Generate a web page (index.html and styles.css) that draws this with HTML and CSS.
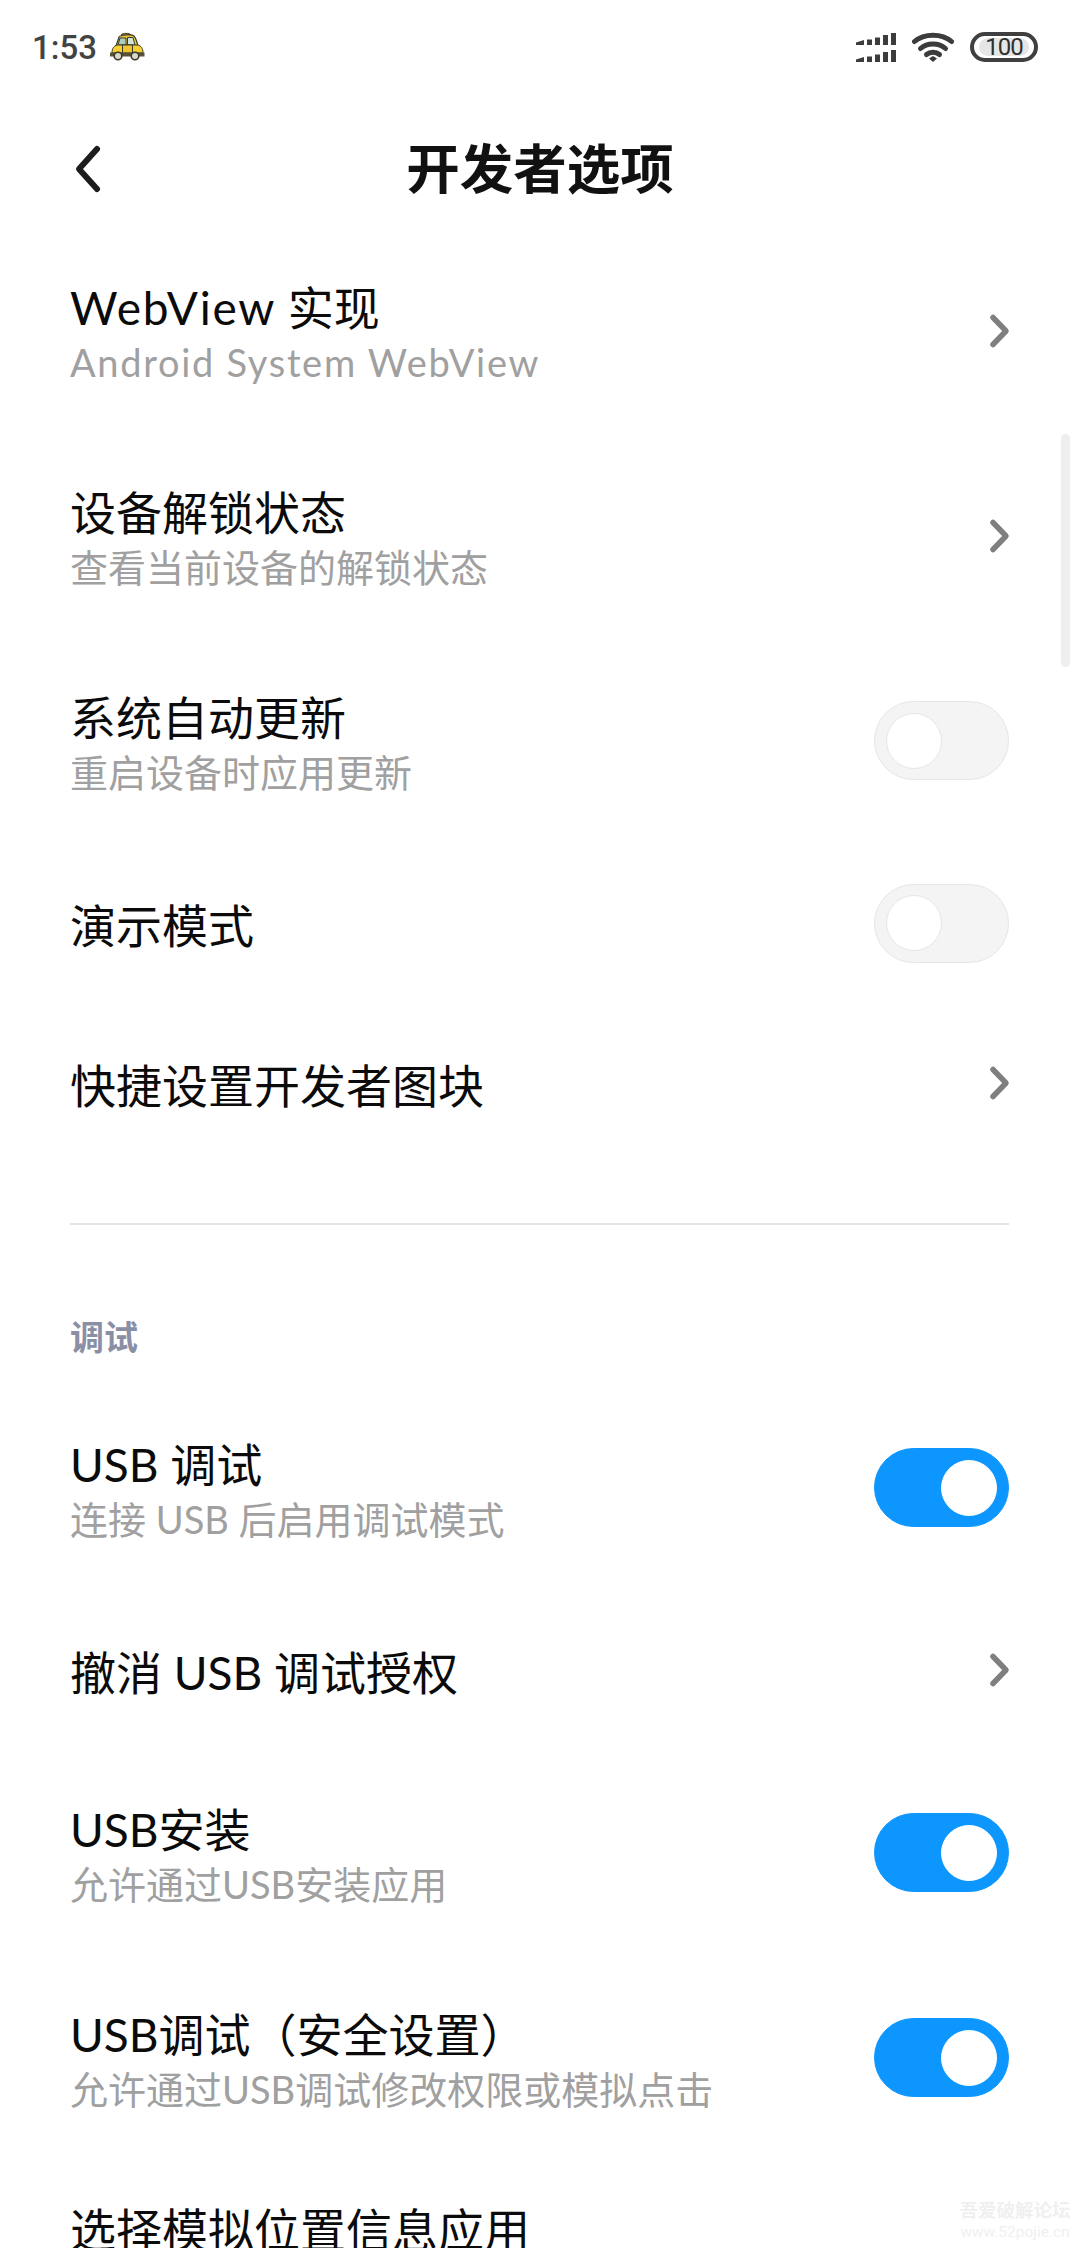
FILE: index.html
```html
<!DOCTYPE html>
<html lang="zh">
<head>
<meta charset="utf-8">
<title>开发者选项</title>
<link rel="stylesheet" href="styles.css">
</head>
<body>
<div class="phone">
  <header class="status">
    <div class="status-left">
      <span class="clock">1:53</span>
      <svg class="taxi" width="36" height="30" viewBox="0 0 36 30">
        <path d="M12 3 C13 .8 21 .8 22 3 Z" fill="#e8b92a" stroke="#3d3a2c" stroke-width="1"/>
        <path d="M7 14 L10 5 C11 3 23 2 25 4 C27 6 28 10 29 14 Z" fill="#f0c93a" stroke="#3d3a2c" stroke-width="1.200"/>
        <path d="M11 6 H17 V13 H9 Z" fill="#a9cfc4" stroke="#3d3a2c" stroke-width="1"/>
        <path d="M18.500 5.500 H24 L26 13 H18.500 Z" fill="#cfe3d8" stroke="#3d3a2c" stroke-width="1"/>
        <path d="M3 21 C3 16 5 14 8 13 H29 C32 14 34 16 34 21 Z" fill="#f6d02f" stroke="#3d3a2c" stroke-width="1"/>
        <path d="M13.500 13 H23.500 V21 H13.500 Z" fill="#f0c52e" stroke="#3d3a2c" stroke-width="1"/>
        <path d="M1 20.500 H35.500 V24.500 H1 Z" fill="#5a5238"/>
        <circle cx="9" cy="24" r="3.800" fill="#d8d8cc" stroke="#3d3a2c" stroke-width="1.600"/>
        <circle cx="26" cy="24" r="3.800" fill="#d8d8cc" stroke="#3d3a2c" stroke-width="1.600"/>
      </svg>
    </div>
    <div class="status-right">
      <svg class="signal" width="40" height="31" viewBox="0 0 40 31">
        <path d="M0 10.500 L8 8 V13 H0 Z M11 7.500 H16 V13 H11 Z M19 5.500 H24 V13 H19 Z M27 3 H32 V13 H27 Z M35 1 H40 V13 H35 Z"/>
        <path d="M0 27.500 L8 25 V30 H0 Z M11 24.500 H16 V30 H11 Z M19 22.500 H24 V30 H19 Z M27 20 H32 V30 H27 Z M35 18 H40 V30 H35 Z"/>
      </svg>
      <svg class="wifi" width="42" height="31" viewBox="0 0 42 31" fill="none">
        <path class="wifi-arc" d="M2.500 9.500 C12 1 30 1 39.500 9.500"/>
        <path class="wifi-arc" d="M8.500 16.500 C15 10.500 27 10.500 33.500 16.500"/>
        <path class="wifi-arc" d="M14.500 22.500 C18 19.500 24 19.500 27.500 22.500"/>
        <path class="wifi-dot" d="M17 26.500 L21 24 L25 26.500 L21 30 Z"/>
      </svg>
      <div class="battery"><span class="battery-num">100</span></div>
    </div>
  </header>

  <nav class="topbar">
    <svg class="back" width="34" height="50" viewBox="0 0 34 50" fill="none">
      <path d="M26 5 L8 25 L26 45"/>
    </svg>
    <h1 class="title">开发者选项</h1>
  </nav>

  <section class="list">
    <div class="row row-two">
      <div class="text"><div class="name"><span class="en">WebView</span> 实现</div><div class="sub"><span class="en">Android System WebView</span></div></div>
      <svg class="chev" width="24" height="36" viewBox="0 0 24 36" fill="none"><path d="M6 4.500 L19 18 L6 31.500"/></svg>
    </div>
    <div class="row row-two">
      <div class="text"><div class="name">设备解锁状态</div><div class="sub">查看当前设备的解锁状态</div></div>
      <svg class="chev" width="24" height="36" viewBox="0 0 24 36" fill="none"><path d="M6 4.500 L19 18 L6 31.500"/></svg>
    </div>
    <div class="row row-two">
      <div class="text"><div class="name">系统自动更新</div><div class="sub">重启设备时应用更新</div></div>
      <div class="toggle"><span class="knob"></span></div>
    </div>
    <div class="row row-one">
      <div class="text"><div class="name">演示模式</div></div>
      <div class="toggle"><span class="knob"></span></div>
    </div>
    <div class="row row-one">
      <div class="text"><div class="name">快捷设置开发者图块</div></div>
      <svg class="chev" width="24" height="36" viewBox="0 0 24 36" fill="none"><path d="M6 4.500 L19 18 L6 31.500"/></svg>
    </div>
  </section>

  <hr class="divider">
  <h2 class="section">调试</h2>

  <section class="list">
    <div class="row row-two">
      <div class="text"><div class="name">USB 调试</div><div class="sub">连接 USB 后启用调试模式</div></div>
      <div class="toggle on"><span class="knob"></span></div>
    </div>
    <div class="row row-one">
      <div class="text"><div class="name">撤消 USB 调试授权</div></div>
      <svg class="chev" width="24" height="36" viewBox="0 0 24 36" fill="none"><path d="M6 4.500 L19 18 L6 31.500"/></svg>
    </div>
    <div class="row row-two">
      <div class="text"><div class="name">USB安装</div><div class="sub">允许通过USB安装应用</div></div>
      <div class="toggle on"><span class="knob"></span></div>
    </div>
    <div class="row row-two">
      <div class="text"><div class="name">USB调试（安全设置）</div><div class="sub">允许通过USB调试修改权限或模拟点击</div></div>
      <div class="toggle on"><span class="knob"></span></div>
    </div>
    <div class="row row-two row-last">
      <div class="text"><div class="name">选择模拟位置信息应用</div></div>
      <svg class="chev" width="24" height="36" viewBox="0 0 24 36" fill="none"><path d="M6 4.500 L19 18 L6 31.500"/></svg>
    </div>
  </section>

  <div class="scrollbar"></div>
  <div class="watermark"><div class="wm-cn">吾爱破解论坛</div><div class="wm-en">www.52pojie.cn</div></div>
</div>
</body>
</html>
```
FILE: styles.css
```css
* { box-sizing: border-box; }
html, body { margin: 0; padding: 0; background: #fff; }
body { font-family: "Lato", "Noto Sans CJK SC", sans-serif; }
.phone { position: relative; width: 1080px; height: 2248px; overflow: hidden; background: #fff; }

.status { height: 94px; padding: 0 42px 0 32px; display: flex; align-items: center; justify-content: space-between; }
.status-left { display: flex; align-items: center; gap: 12px; }
.clock { font-family: "Roboto", sans-serif; font-size: 33px; font-weight: 500; color: #434343; }
.taxi { display: block; }
.status-right { display: flex; align-items: center; gap: 16px; }
.signal { display: block; fill: #3c3c3c; }
.wifi { display: block; }
.wifi-arc { stroke: #3c3c3c; stroke-width: 5; stroke-linecap: round; }
.wifi-dot { fill: #3c3c3c; }
.battery { width: 68px; height: 30px; border: 4px solid #3f3f3f; border-radius: 15px; display: flex; align-items: center; justify-content: center; background: #fff; }
.battery-num { font-family: "Roboto", sans-serif; font-size: 24px; line-height: 18px; color: #303030; padding: 0 6px; background: #e6e6e6; border-radius: 9px; letter-spacing: -1px; }

.topbar { position: relative; height: 134px; padding-top: 16px; display: flex; align-items: center; justify-content: center; }
.back { position: absolute; left: 71px; top: 50px; }
.back path { stroke: #1c1c1c; stroke-width: 6; stroke-linecap: round; stroke-linejoin: round; }
.title { margin: 0; font-size: 53.500px; font-weight: 700; color: #111; line-height: 1; }

.list { display: flex; flex-direction: column; }
.row { display: flex; align-items: center; justify-content: space-between; padding: 0 71px 0 70px; }
.row-two { height: 205px; }
.row-two .text { padding-top: 4px; }
.row-one { height: 160px; }
.row-one .text { padding-top: 5px; }
.row-last { align-items: flex-start; padding-top: 41px; }
.row-last .text { padding-top: 0; }
.row-last .chev { margin-top: 56px; }
.text { min-width: 0; }
.name { font-size: 46px; line-height: 58px; color: #0b0b0b; white-space: nowrap; }
.sub { font-size: 38px; line-height: 50px; color: #a0a0a0; white-space: nowrap; }
.en { letter-spacing: 1.700px; }
.chev { display: block; margin-right: -2px; flex: none; }
.chev path { stroke: #7f7f7f; stroke-width: 5.500; stroke-linecap: round; stroke-linejoin: round; }

.toggle { width: 135px; height: 79px; border-radius: 40px; background: #f4f4f4; border: 1px solid #e6e6e6; display: flex; align-items: center; padding: 0 11px; flex: none; }
.knob { width: 56px; height: 56px; border-radius: 50%; background: #fff; border: 1px solid #e6e6e6; }
.toggle.on { background: #0c96fe; border-color: #0c96fe; justify-content: flex-end; }
.toggle.on .knob { border-color: #fff; }

.divider { margin: 60px 71px 0 70px; border: 0; height: 2px; background: #e4e4e4; }
.section { margin: 87px 71px 23px 70px; font-size: 34px; line-height: 50px; font-weight: 700; color: #8b8fa5; }

.scrollbar { position: absolute; left: 1061px; top: 434px; width: 9px; height: 233px; border-radius: 5px; background: #eeeeee; }
.watermark { position: absolute; right: 8px; bottom: 8px; width: 114px; text-align: center; color: #f0f0f0; line-height: 1; }
.wm-cn { font-size: 18.500px; font-weight: 700; white-space: nowrap; }
.wm-en { font-family: "Roboto", sans-serif; font-size: 15.500px; margin-top: 5px; white-space: nowrap; }
```
